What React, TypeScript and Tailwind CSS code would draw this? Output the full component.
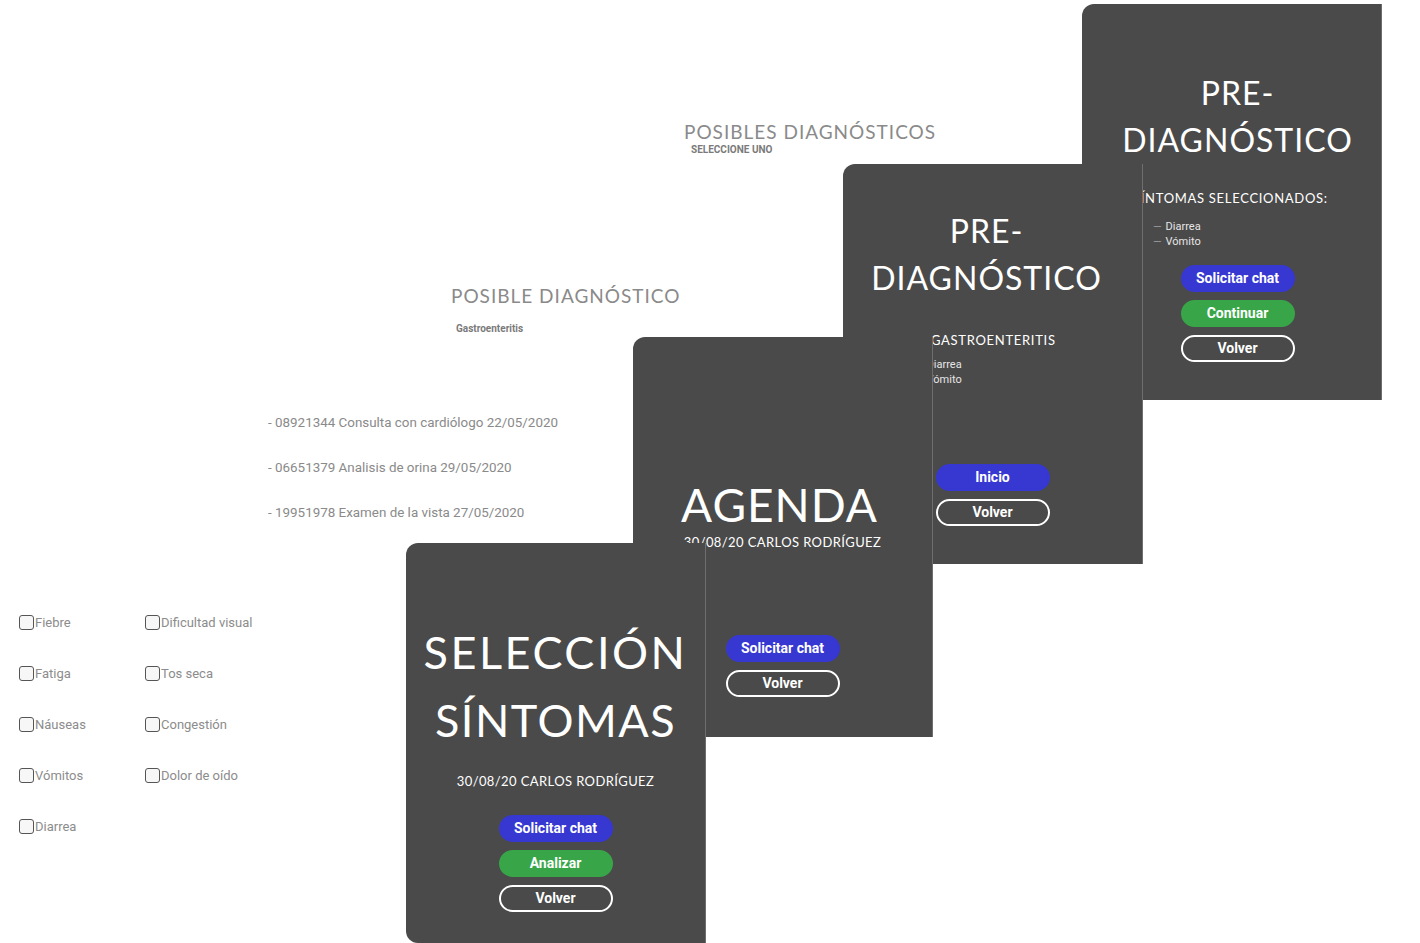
import React from 'react';

const title = "font-['Lato',sans-serif] text-white";
const body = "font-['Roboto',sans-serif]";

type BtnKind = 'blue' | 'green' | 'outline';

const Btn: React.FC<{ kind: BtnKind; label: string }> = ({ kind, label }) => {
  const styles: Record<BtnKind, string> = {
    blue: 'bg-[#3737d2] border-2 border-[#3737d2]',
    green: 'bg-[#38a648] border-2 border-[#38a648]',
    outline: 'bg-transparent border-2 border-white',
  };
  return (
    <div
      className={`${styles[kind]} ${body} w-[114px] h-[27px] rounded-full flex items-center justify-center text-[14px] font-bold text-white`}
    >
      {label}
    </div>
  );
};

// a phone-like screen laid on the canvas
const Screen: React.FC<{ className: string; children: React.ReactNode }> = ({ className, children }) => (
  <div
    className={`absolute w-[300px] bg-[#4a4a4a] rounded-l-[12px] border-r border-[#6e6e6e] overflow-hidden ${className}`}
  >
    {children}
  </div>
);

const Dash: React.FC<{ text: string }> = ({ text }) => (
  <div className="flex items-center gap-[4px] leading-[15px]">
    <span className="text-[#9a9a9a]">—</span>
    <span className="text-[#e6e6e6]">{text}</span>
  </div>
);

const symptoms: [string, string | null][] = [
  ['Fiebre', 'Dificultad visual'],
  ['Fatiga', 'Tos seca'],
  ['Náuseas', 'Congestión'],
  ['Vómitos', 'Dolor de oído'],
  ['Diarrea', null],
];

const Check: React.FC<{ label: string }> = ({ label }) => (
  <div className="flex items-center">
    <span className="w-[15px] h-[15px] rounded-[3px] border-[1.5px] border-[#555] bg-[#f7f7f7]" />
    <span className={`${body} text-[13px] text-[#8c8c8c] ml-[1px]`}>{label}</span>
  </div>
);

const App: React.FC = () => {
  return (
    <div className="relative w-[1420px] h-[943px] bg-white overflow-hidden">
      {/* background screen fragments */}
      <div className="absolute left-[684px] top-[119px] flex flex-col">
        <div className="font-['Lato',sans-serif] text-[19px] leading-[26px] tracking-[1px] text-[#8a8a8a]">
          POSIBLES DIAGNÓSTICOS
        </div>
        <div className={`${body} text-[10px] font-bold text-[#7a7a7a] ml-[7px] leading-[10px]`}>SELECCIONE UNO</div>
      </div>

      <div className="absolute left-[451px] top-[283px] flex flex-col">
        <div className="font-['Lato',sans-serif] text-[19px] leading-[26px] tracking-[1px] text-[#8a8a8a]">
          POSIBLE DIAGNÓSTICO
        </div>
        <div className={`${body} text-[10px] font-bold text-[#7a7a7a] ml-[5px] mt-[14px] leading-[12px]`}>
          Gastroenteritis
        </div>
      </div>

      <div className={`absolute left-[268px] top-[414px] flex flex-col gap-[27px] ${body} text-[13.4px] leading-[18px] text-[#8a8a8a]`}>
        <div>- 08921344 Consulta con cardiólogo 22/05/2020</div>
        <div>- 06651379 Analisis de orina 29/05/2020</div>
        <div>- 19951978 Examen de la vista 27/05/2020</div>
      </div>

      <div className="absolute left-[19px] top-[613px] grid grid-cols-[126px_auto] gap-y-[31.5px]">
        {symptoms.map(([a, b]) => (
          <React.Fragment key={a}>
            <Check label={a} />
            {b ? <Check label={b} /> : <div />}
          </React.Fragment>
        ))}
      </div>

      {/* screen 1: pre-diagnóstico síntomas */}
      <Screen className="left-[1082px] top-[4px] h-[396px]">
        <div className="flex flex-col items-center pl-[12px] pt-[65px]">
          <div className={`${title} text-[32px] leading-[47px] tracking-[1px] text-center`}>PRE-</div>
          <div className={`${title} text-[32px] leading-[47px] tracking-[1px] text-center`}>DIAGNÓSTICO</div>
        </div>
        <div className={`${title} text-[13px] leading-[18px] tracking-[0.7px] mt-[26px] pl-[51px]`}>SÍNTOMAS SELECCIONADOS:</div>
        <div className={`${body} text-[11px] mt-[12px] pl-[71px]`}>
          <Dash text="Diarrea" />
          <Dash text="Vómito" />
        </div>
        <div className="flex flex-col items-center gap-[8px] mt-[16px] pl-[12px]">
          <Btn kind="blue" label="Solicitar chat" />
          <Btn kind="green" label="Continuar" />
          <Btn kind="outline" label="Volver" />
        </div>
      </Screen>

      {/* screen 2: pre-diagnóstico resultado */}
      <Screen className="left-[843px] top-[164px] h-[400px]">
        <div className="flex flex-col items-center pr-[12px] pt-[43px]">
          <div className={`${title} text-[32px] leading-[47px] tracking-[1px] text-center`}>PRE-</div>
          <div className={`${title} text-[32px] leading-[47px] tracking-[1px] text-center`}>DIAGNÓSTICO</div>
        </div>
        <div className={`${title} text-[13px] leading-[18px] tracking-[0.7px] mt-[30px] pl-[88px]`}>GASTROENTERITIS</div>
        <div className={`${body} text-[11px] mt-[8px] pl-[71px]`}>
          <Dash text="Diarrea" />
          <Dash text="Vómito" />
        </div>
        <div className="flex flex-col items-center gap-[8px] mt-[77px]">
          <Btn kind="blue" label="Inicio" />
          <Btn kind="outline" label="Volver" />
        </div>
      </Screen>

      {/* screen 3: agenda */}
      <Screen className="left-[633px] top-[337px] h-[400px]">
        <div className="flex flex-col items-center pt-[138px]">
          <div className={`${title} text-[46px] leading-[60px] tracking-[1px] pr-[6px]`}>AGENDA</div>
          <div className={`${title} text-[13px] leading-[18px] tracking-[0.4px] mt-[-2px]`}>30/08/20 CARLOS RODRÍGUEZ</div>
          <div className="flex flex-col items-center gap-[8px] mt-[84px]">
            <Btn kind="blue" label="Solicitar chat" />
            <Btn kind="outline" label="Volver" />
          </div>
        </div>
      </Screen>

      {/* screen 4: selección síntomas */}
      <Screen className="left-[406px] top-[543px] h-[400px] rounded-bl-[12px]">
        <div className="flex flex-col items-center pt-[75px]">
          <div className={`${title} text-[45px] leading-[68px] tracking-[2.5px]`}>SELECCIÓN</div>
          <div className={`${title} text-[45px] leading-[68px] tracking-[1.5px]`}>SÍNTOMAS</div>
          <div className={`${title} text-[13px] leading-[18px] tracking-[0.4px] mt-[18px]`}>30/08/20 CARLOS RODRÍGUEZ</div>
          <div className="flex flex-col items-center gap-[8px] mt-[25px]">
            <Btn kind="blue" label="Solicitar chat" />
            <Btn kind="green" label="Analizar" />
            <Btn kind="outline" label="Volver" />
          </div>
        </div>
      </Screen>
    </div>
  );
};

export default App;
